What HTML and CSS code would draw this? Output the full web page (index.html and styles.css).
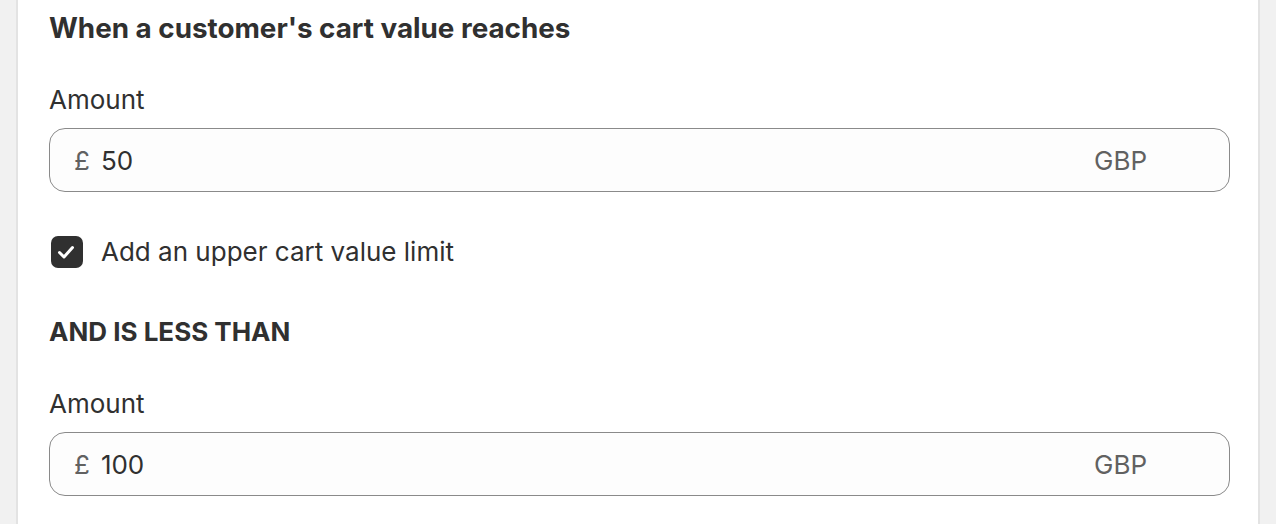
FILE: index.html
```html
<!DOCTYPE html>
<html lang="en">
<head>
<meta charset="utf-8">
<title>Cart value condition</title>
<link rel="stylesheet" href="styles.css">
</head>
<body>
<div class="card">
  <h2 class="heading heading-main">When a customer's cart value reaches</h2>
  <div class="field">
    <label class="label">Amount</label>
    <div class="input">
      <span class="prefix">£</span>
      <span class="value">50</span>
      <span class="suffix">GBP</span>
    </div>
  </div>
  <label class="checkbox-row">
    <span class="checkbox">
      <svg viewBox="0 0 32 32" width="32" height="32"><path d="M8.5 16.5l4.5 4.5 8.5-9.5" fill="none" stroke="#fff" stroke-width="3" stroke-linecap="round" stroke-linejoin="round"/></svg>
    </span>
    <span class="checkbox-label">Add an upper cart value limit</span>
  </label>
  <h2 class="heading heading-upper">AND IS LESS THAN</h2>
  <div class="field">
    <label class="label">Amount</label>
    <div class="input">
      <span class="prefix">£</span>
      <span class="value">100</span>
      <span class="suffix">GBP</span>
    </div>
  </div>
</div>
</body>
</html>
```
FILE: styles.css
```css
html, body {
  margin: 0;
  padding: 0;
}
body {
  background: #f1f1f1;
  font-family: Inter, "Noto Sans", sans-serif;
  color: #303030;
  height: 524px;
  overflow: hidden;
}
.card {
  margin-left: 16px;
  width: 1181px;
  min-height: 524px;
  background: #ffffff;
  border-left: 2px solid #e3e3e3;
  border-right: 2px solid #e3e3e3;
  padding: 8px 28px 0 31px;
  box-sizing: content-box;
  display: flex;
  flex-direction: column;
}
.heading {
  margin: 0;
  font-size: 26px;
  line-height: 40px;
  font-weight: 650;
  color: #303030;
}
.heading-main {
  font-size: 27.8px;
}
.heading-upper {
  margin-top: 40px;
}
.field {
  margin-top: 32px;
  display: flex;
  flex-direction: column;
}
.label {
  font-size: 26px;
  line-height: 40px;
  margin-bottom: 8px;
}
.input {
  height: 64px;
  box-sizing: border-box;
  border: 1.5px solid #8a8a8a;
  border-radius: 16px;
  background: #fdfdfd;
  display: flex;
  align-items: center;
  padding: 0 24px;
  font-size: 26px;
}
.prefix {
  color: #616161;
  margin-right: 11px;
}
.value {
  flex: 1;
  color: #303030;
}
.suffix {
  color: #616161;
  margin-right: 58px;
}
.checkbox-row {
  margin-top: 40px;
  display: flex;
  align-items: center;
  height: 40px;
}
.checkbox {
  width: 32px;
  height: 32px;
  margin-left: 2px;
  border-radius: 7px;
  background: #303030;
  display: flex;
  align-items: center;
  justify-content: center;
}
.checkbox svg {
  display: block;
  width: 32px;
  height: 32px;
}
.checkbox-label {
  margin-left: 18px;
  font-size: 26px;
  line-height: 40px;
}
```
